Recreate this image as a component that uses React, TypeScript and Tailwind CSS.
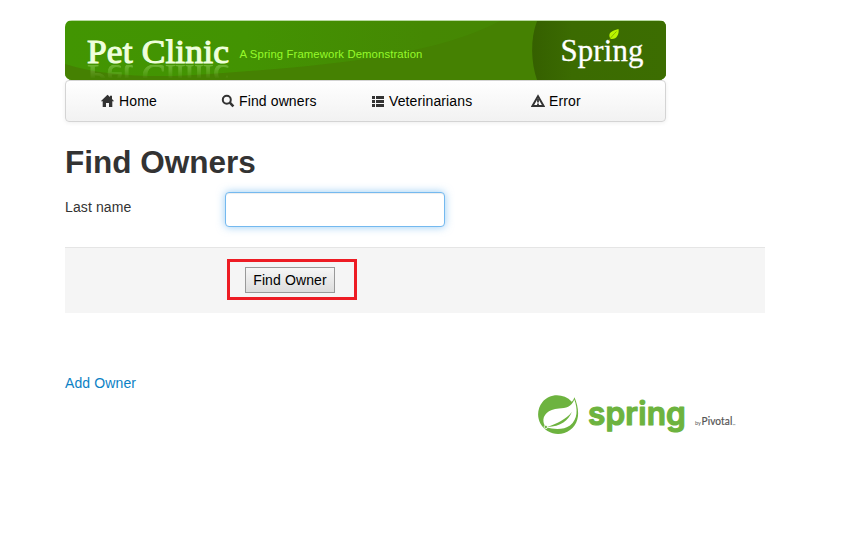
import React from "react";

const serif = "'Liberation Serif', serif";

function Banner() {
  return (
    <svg className="block h-[60px] w-[601px]" viewBox="0 0 601 60" role="img" aria-label="Pet Clinic">
      <defs>
        <linearGradient id="base" x1="0" x2="1" y1="0" y2="0">
          <stop offset="0" stopColor="#429502" />
          <stop offset="0.3" stopColor="#439302" />
          <stop offset="0.6" stopColor="#458803" />
          <stop offset="1" stopColor="#458403" />
        </linearGradient>
        <linearGradient id="dark" x1="0" x2="1" y1="0" y2="0">
          <stop offset="0" stopColor="#356000" />
          <stop offset="0.3" stopColor="#3b6b01" />
          <stop offset="1" stopColor="#3c6d01" />
        </linearGradient>
        <linearGradient id="fade" x1="0" x2="0" y1="0" y2="1">
          <stop offset="0" stopColor="#fff" stopOpacity="0.3" />
          <stop offset="1" stopColor="#fff" stopOpacity="0.03" />
        </linearGradient>
        <mask id="reflection">
          <rect x="0" y="45" width="601" height="13" fill="url(#fade)" />
        </mask>
        <clipPath id="frame">
          <rect x="0" y="0" width="601" height="60" rx="7" />
        </clipPath>
      </defs>
      <g clipPath="url(#frame)">
        <rect width="601" height="60" fill="#b9d9a2" />
        <rect y="1" width="601" height="59" fill="url(#base)" />
        <path d="M0 44 C40 57 95 58 145 54 C260 46 370 36 435 1 H601 V60 H0Z" fill="#458102" />
        <path d="M472 1 C465 19 466 43 472 60 H601 V1Z" fill="url(#dark)" />
        <g mask="url(#reflection)">
          <text x="22" y="43" transform="translate(0 88) scale(1 -1)" fontFamily={serif} fontSize="34" textLength="142" lengthAdjust="spacingAndGlyphs" fill="#d5ffa8" stroke="#d5ffa8" strokeWidth="0.8" aria-hidden="true">Pet Clinic</text>
        </g>
        <text x="22" y="42.500" fontFamily={serif} fontSize="34" textLength="142" lengthAdjust="spacingAndGlyphs" fill="#efffdc" stroke="#efffdc" strokeWidth="1.100">Pet Clinic</text>
        <text x="174.500" y="38" fontFamily="'Liberation Sans', sans-serif" fontSize="11" textLength="183" lengthAdjust="spacingAndGlyphs" fill="#96fa2b">A Spring Framework Demonstration</text>
        <text x="495.500" y="41" fontFamily={serif} fontSize="32" textLength="83" lengthAdjust="spacingAndGlyphs" fill="#fff" stroke="#fff" strokeWidth="0.300">Spring</text>
        <path d="M545.500 19 C542 13 546.500 11 553.500 9 C554.500 14 551.500 20 545.500 19Z" fill="#b9f500" />
        <path d="M544 20.500 C546 17 549 14 551.500 11.500" fill="none" stroke="#709c00" strokeWidth="0.7" />
      </g>
    </svg>
  );
}

const HomeIcon = () => (
  <svg className="h-[14px] w-[14px]" viewBox="0 0 14 14" fill="#333">
    <path d="M6.500 .8 L9 3.100 V1.800 H11 V5.100 L13.200 7.300 H11.300 V13 H8 V9 H5 V13 H1.700 V7.300 H-.2Z" />
  </svg>
);
const SearchIcon = () => (
  <svg className="h-[14px] w-[14px]" viewBox="0 0 14 14" fill="none" stroke="#333">
    <circle cx="5.800" cy="5.700" r="4" strokeWidth="2" />
    <path d="M8.800 8.700 L12.400 12.300" strokeWidth="2.600" />
  </svg>
);
const ListIcon = () => (
  <svg className="h-[14px] w-[14px]" viewBox="0 0 14 14" fill="#333">
    <path d="M1 2h3v3H1zM5 2h8v3H5zM1 6h3v3H1zM5 6h8v3H5zM1 10h3v3H1zM5 10h8v3H5z" />
  </svg>
);
const WarningIcon = () => (
  <svg className="h-[14px] w-[14px]" viewBox="0 0 14 14">
    <path d="M7 2.300 L12.600 12 H1.400Z" fill="#fff" stroke="#333" strokeWidth="2" />
    <path d="M7 5v3.500M7 9.500v1.500" stroke="#333" strokeWidth="1.800" />
  </svg>
);

function NavItem({ icon, label, className }: { icon: React.ReactNode; label: string; className: string }) {
  return (
    <a href="#" className={`flex items-center gap-1 ${className}`}>
      {icon}
      <span>{label}</span>
    </a>
  );
}

function SpringLogo() {
  return (
    <svg className="block h-[44px] w-[200px]" viewBox="0 0 200 44" role="img" aria-label="Spring by Pivotal">
      <path d="M36.500 4.200 C35.800 6 35 7.400 33.800 8.700 C25.500 0 11.500 .2 4.300 9.200 C-3 18.500 -.5 32 9.500 38 C21 45 36 39 39.300 26.500 C41.200 19.500 39.600 12 36.500 4.200Z" fill="#6db33f" />
      <path d="M36.300 6.500 C33.500 14 28 15 21 15.500 C10 16.500 4.500 22 5.500 29 C6 32 7.300 33.500 8.800 34.500 C16 36.500 26 37 32 32.500 C40 26 39.800 16 36.300 6.500Z" fill="#fff" />
      <path d="M9 34 C19 30.500 28 26.500 33.800 19 C30.500 27.500 23 33.500 9 34Z" fill="#6db33f" />
      <circle cx="7.800" cy="34" r="1.700" fill="#6db33f" stroke="#fff" strokeWidth="0.800" />
      <text x="50" y="31.500" fontFamily="Inter, sans-serif" fontWeight="600" fontSize="32" textLength="98" lengthAdjust="spacingAndGlyphs" fill="#6db33f" stroke="#6db33f" strokeWidth="1.200" strokeLinejoin="round">spring</text>
      <text x="157" y="32" fontFamily="Lato, sans-serif" fontSize="6" textLength="6" lengthAdjust="spacingAndGlyphs" fill="#555">by</text>
      <text x="163.500" y="32" fontFamily="Lato, sans-serif" fontSize="10.500" textLength="31" lengthAdjust="spacingAndGlyphs" fill="#555" stroke="#555" strokeWidth="0.200">Pivotal</text>
      <text x="194.500" y="34" fontFamily="Lato, sans-serif" fontSize="4" fill="#666">™</text>
    </svg>
  );
}

export default function App() {
  return (
    <div className="h-[535px] w-[865px] bg-white pl-[65px] pt-5 font-['Liberation_Sans',Arial,sans-serif] text-[14px] leading-5 tracking-[0.12px] text-[#333]">
      <header className="w-[601px]">
        <Banner />
        <nav className="flex h-[42px] items-center rounded border border-[#d4d4d4] bg-linear-to-b from-white to-[#f2f2f2] pl-[35px] text-black shadow-[0_1px_4px_rgba(0,0,0,0.065)]">
          <NavItem icon={<HomeIcon />} label="Home" className="w-[120px]" />
          <NavItem icon={<SearchIcon />} label="Find owners" className="w-[150px]" />
          <NavItem icon={<ListIcon />} label="Veterinarians" className="w-[160px]" />
          <NavItem icon={<WarningIcon />} label="Error" className="w-[60px]" />
        </nav>
      </header>
      <main className="w-[700px]">
        <h1 className="mt-5 text-[31.5px] font-bold leading-10 tracking-normal">Find Owners</h1>
        <form onSubmit={(e) => e.preventDefault()}>
          <div className="mt-[10px] flex h-[35px]">
            <label htmlFor="lastName" className="w-40 pt-[5px]">Last name</label>
            <input id="lastName" className="h-[35px] w-[220px] rounded border border-[#74b9ef] bg-white px-1.5 shadow-[inset_0_1px_1px_rgba(0,0,0,0.075),0_0_8px_rgba(82,168,236,0.6)] outline-none" />
          </div>
          <div className="mt-5 h-[66px] border-t border-[#e5e5e5] bg-[#f5f5f5] pl-[162px] pt-[11px]">
            <div className="flex h-[41px] w-[130px] items-center border-3 border-[#ed1c24] pl-[15px]">
              <button className="h-[26px] w-[90px] whitespace-nowrap border border-[#999] bg-linear-to-b from-[#f6f6f6] to-[#dddddd] tracking-[0.12px] text-black">Find Owner</button>
            </div>
          </div>
        </form>
        <a href="#" className="mt-[60px] block w-fit text-[#0b81c5]">Add Owner</a>
        <div className="pl-[473px]"><SpringLogo /></div>
      </main>
    </div>
  );
}
